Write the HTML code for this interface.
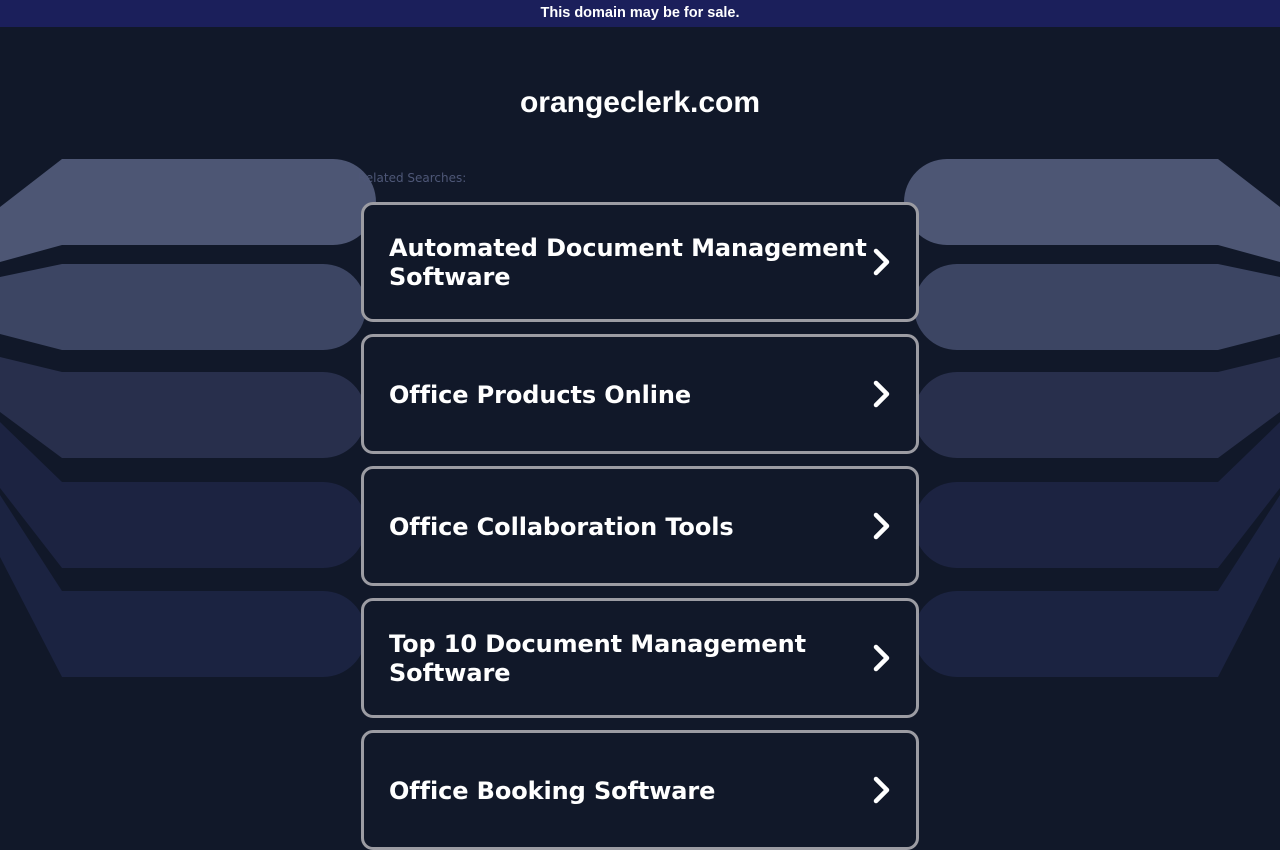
<!DOCTYPE html>
<html><head><meta charset="utf-8"><style>
*{margin:0;padding:0;box-sizing:border-box}
html,body{width:1280px;height:800px;overflow:hidden;background:#111829;font-family:"DejaVu Sans","Liberation Sans",sans-serif}
.top{position:absolute;left:0;top:0;width:1280px;height:27px;background:#1b1f5b;color:#fff;font:bold 14.5px "Liberation Sans",sans-serif;text-align:center;line-height:27px}
h1{position:absolute;top:86px;left:0;width:1280px;text-align:center;color:#fff;font:bold 30px "Liberation Sans",sans-serif}
svg.bg{position:absolute;left:0;top:0}
.rel{position:absolute;left:358px;top:171px;font-size:12px;color:#4e5777}
.card{position:absolute;left:361px;width:558px;height:120px;border:3px solid #9c9ca3;border-radius:12px;background:#111829;color:#fff;font-weight:bold;font-size:24px;line-height:29px;display:flex;align-items:center;padding-left:25px;padding-right:40px;padding-top:2px;overflow:hidden;letter-spacing:-0.1px}
.card svg{position:absolute;right:24px;top:50%;margin-top:-14px}
</style></head><body>
<svg class="bg" width="1280" height="800">
<defs>
<g id="bands">
<path d="M0,207 L62,159 H333 A43,43 0 0 1 333,245 H62 L0,262Z" fill="#4d5674"/>
<path d="M0,277 L62,264 H323 A43,43 0 0 1 323,350 H62 L0,334Z" fill="#3c4563"/>
<path d="M0,357 L62,372 H323 A43,43 0 0 1 323,458 H62 L0,412Z" fill="#282f4c"/>
<path d="M0,422 L62,482 H323 A43,43 0 0 1 323,568 H62 L0,488Z" fill="#1c2341"/>
<path d="M0,495 L62,591 H323 A43,43 0 0 1 323,677 H62 L0,557Z" fill="#1b2341"/>
</g>
</defs>
<use href="#bands"/>
<use href="#bands" transform="translate(1280,0) scale(-1,1)"/>
</svg>
<div class="top">This domain may be for sale.</div>
<h1>orangeclerk.com</h1>
<div class="rel">Related Searches:</div>
<div class="card" style="top:202px">Automated Document Management Software<svg width="20" height="28"><polyline points="4,3 15,14 4,25" fill="none" stroke="#fff" stroke-width="4.5" stroke-linecap="round" stroke-linejoin="round"/></svg></div>
<div class="card" style="top:334px">Office Products Online<svg width="20" height="28"><polyline points="4,3 15,14 4,25" fill="none" stroke="#fff" stroke-width="4.5" stroke-linecap="round" stroke-linejoin="round"/></svg></div>
<div class="card" style="top:466px">Office Collaboration Tools<svg width="20" height="28"><polyline points="4,3 15,14 4,25" fill="none" stroke="#fff" stroke-width="4.5" stroke-linecap="round" stroke-linejoin="round"/></svg></div>
<div class="card" style="top:598px">Top 10 Document Management Software<svg width="20" height="28"><polyline points="4,3 15,14 4,25" fill="none" stroke="#fff" stroke-width="4.5" stroke-linecap="round" stroke-linejoin="round"/></svg></div>
<div class="card" style="top:730px">Office Booking Software<svg width="20" height="28"><polyline points="4,3 15,14 4,25" fill="none" stroke="#fff" stroke-width="4.5" stroke-linecap="round" stroke-linejoin="round"/></svg></div>
</body></html>
